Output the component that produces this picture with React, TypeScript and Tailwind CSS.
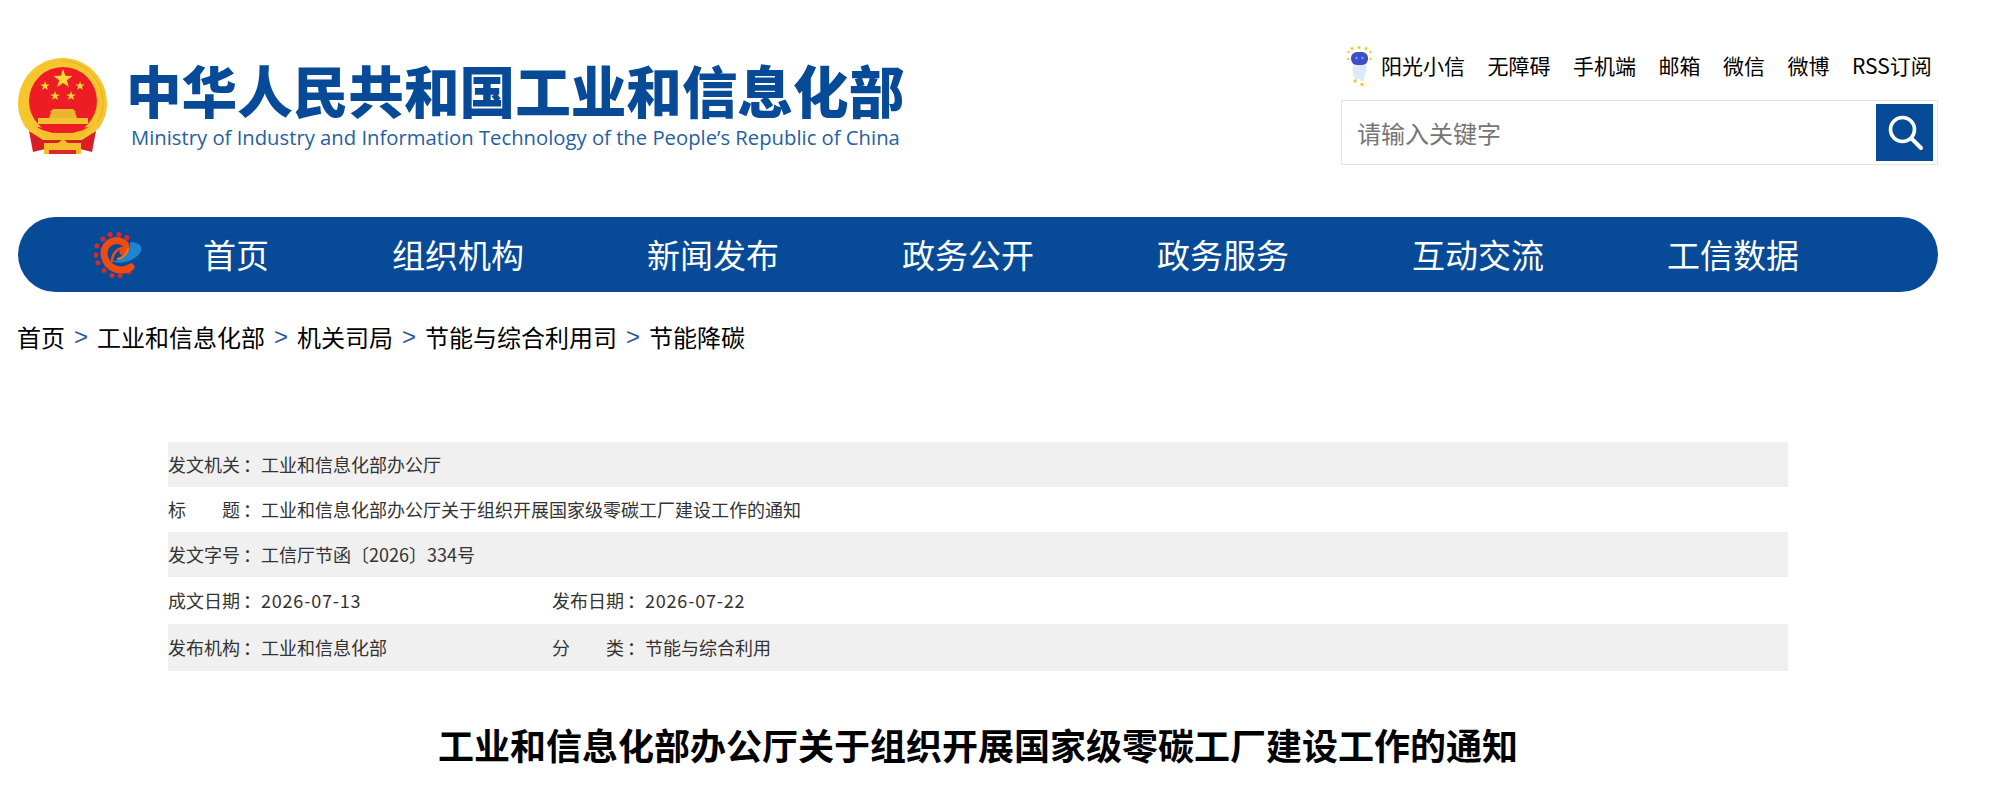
import React from 'react';

const topLinks = ['无障碍', '手机端', '邮箱', '微信', '微博', 'RSS订阅'];
const navItems = ['首页', '组织机构', '新闻发布', '政务公开', '政务服务', '互动交流', '工信数据'];
const crumbs = ['工业和信息化部', '机关司局', '节能与综合利用司', '节能降碳'];

function starPoints(cx: number, cy: number, r: number) {
  const pts: string[] = [];
  for (let i = 0; i < 10; i++) {
    const rad = i % 2 === 0 ? r : r * 0.4;
    const a = (Math.PI / 5) * i - Math.PI / 2;
    pts.push(`${(cx + rad * Math.cos(a)).toFixed(2)},${(cy + rad * Math.sin(a)).toFixed(2)}`);
  }
  return pts.join(' ');
}

function Emblem() {
  return (
    <svg viewBox="0 0 89 97" className="w-[89px] h-[97px] shrink-0 blur-[0.5px]">
      <path d="M44.5 1C69 1 89 21 89 47c0 9-3 17-8 24L66 84H23L8 71C3 64 0 56 0 47 0 21 20 1 44.5 1z" fill="#f6c630" />
      <path d="M44.5 4C67 4 85 23 85 46c0 7-2 14-6 20" fill="none" stroke="#e3a51d" strokeWidth="0.8" />
      <circle cx="45" cy="44" r="34" fill="#ee1c25" />
      <polygon points={starPoints(45, 22, 10)} fill="#fbd835" />
      <polygon points={starPoints(27, 29, 5)} fill="#fbd835" />
      <polygon points={starPoints(62, 29, 5)} fill="#fbd835" />
      <polygon points={starPoints(37, 39, 5)} fill="#fbd835" />
      <polygon points={starPoints(53, 39, 5)} fill="#fbd835" />
      <path d="M31 61l2-6h-1l3-3h20l3 3h-1l2 6z" fill="#eab62d" />
      <rect x="20" y="61" width="50" height="6" fill="#f3c233" />
      <path d="M11 74l4 21 16-4h27l16 4 4-21-14 9H25z" fill="#d81e27" />
      <path d="M14 67c7 3 14 8 22 9 4-4 13-4 17 0 8-1 15-6 22-9-4 8-13 15-22 16H36c-9-1-18-8-22-16z" fill="#f4bf2a" />
      <path d="M19 70c9 1 16 1 26 1s17 0 25-1c-5 4-13 6-25 6s-20-2-26-6z" fill="#ee1c25" />
      <path d="M26 86h14l5-4 5 4h13v11H26z" fill="#f4bf2a" />
      <rect x="31" y="93" width="27" height="4" fill="#e0252c" />
    </svg>
  );
}

function RobotIcon() {
  return (
    <svg viewBox="0 0 25 40" className="w-[25px] h-[40px] shrink-0 blur-[0.3px]">
      <path d="M7 17c2-1 9-1 11 0 2 3 2 8 0 12l-1 6h-3l-2-3-2 3-3-4c-2-4-2-10 0-14z" fill="#dce9f8" />
      <rect x="4" y="6" width="17" height="13" rx="6" fill="#3d4fc8" />
      <circle cx="9.5" cy="12" r="1.2" fill="#6fa8f5" />
      <circle cx="15.5" cy="12" r="1.2" fill="#6fa8f5" />
      <g fill="#fbc531">
        <circle cx="5" cy="2.5" r="1.5" />
        <circle cx="12" cy="1.5" r="1.5" />
        <circle cx="19" cy="2.5" r="1.5" />
        <circle cx="1.5" cy="6" r="1.2" />
        <circle cx="23.5" cy="6" r="1.2" />
        <circle cx="1" cy="13" r="1.2" />
        <circle cx="23.5" cy="13" r="1.2" />
        <circle cx="8" cy="35" r="1.7" />
        <circle cx="15" cy="38.5" r="1.7" />
      </g>
    </svg>
  );
}

function SiteIcon() {
  return (
    <svg viewBox="0 0 48 46" className="w-[48px] h-[46px] shrink-0">
      <g fill="#d92a2a">
        <circle cx="9" cy="7" r="2.5" /><circle cx="16" cy="2.5" r="2.5" /><circle cx="25" cy="2.5" r="2.5" /><circle cx="33" cy="5.5" r="2.5" />
        <circle cx="3" cy="14" r="2.5" /><circle cx="1.8" cy="23" r="2.5" /><circle cx="4" cy="31" r="2.5" /><circle cx="10" cy="38.5" r="2.5" />
        <circle cx="18" cy="43.5" r="2.5" /><circle cx="26" cy="43.5" r="2.5" /><circle cx="35" cy="40" r="2.5" />
      </g>
      <path d="M37 35C28 41 14 38 10.5 25 8 14 17 7 26 9c7 2 8 7 3 11" fill="none" stroke="#ee4a12" strokeWidth="7" strokeLinecap="round" />
      <path d="M13 27c9 6 25-3 23-17 8 0 13 4 11 9-3 8-21 17-34 8z" fill="#1c86d1" />
      <path d="M18 29c0-7 5-12 10-13" fill="none" stroke="#ee4a12" strokeWidth="2.6" strokeLinecap="round" />
      <path d="M24 27c5-1 9-5 10-10" fill="none" stroke="#f07a1a" strokeWidth="2.2" strokeLinecap="round" />
    </svg>
  );
}

function Label({ text }: { text: string }) {
  return (
    <span className="flex w-[93px] shrink-0">
      <span className="flex w-[72px] justify-between">
        {text.split('').map((c, i) => <span key={i}>{c}</span>)}
      </span>
      <span className="ml-[3px]">：</span>
    </span>
  );
}

function Row({ className, children }: { className: string; children: React.ReactNode }) {
  return <div className={`flex items-center ${className}`}>{children}</div>;
}

export default function App() {
  return (
    <div className="h-[812px] w-[2010px] overflow-hidden bg-white font-['Noto_Sans_CJK_SC','Noto_Sans',sans-serif]">
      <div className="ml-[18px] w-[1920px]">
        <header className="flex h-[217px] justify-between">
          <div className="flex pt-[57px]">
            <Emblem />
            <div className="ml-[19px] pt-[1px]">
              <div className="h-[62px] text-[55.6px] font-black leading-[62px] text-[#064a98] blur-[0.4px]">中华人民共和国工业和信息化部</div>
              <div className="ml-[5px] mt-[3px] whitespace-nowrap font-['Open_Sans',sans-serif] text-[20.25px] leading-[28px] text-[#2560a2]">Ministry of Industry and Information Technology of the People’s Republic of China</div>
            </div>
          </div>
          <div className="w-[597px] pt-[46px]">
            <div className="flex h-[40px] items-center text-[21px] text-black">
              <span className="ml-[6px] mr-[9px]"><RobotIcon /></span>
              <span className="mr-[22.5px]">阳光小信</span>
              {topLinks.map(t => <span key={t} className="mr-[22.5px] last:mr-0">{t}</span>)}
            </div>
            <div className="mt-[14px] flex h-[65px] items-center border border-[#e4e4e4] pl-[15px] pr-[4px]">
              <input placeholder="请输入关键字" className="min-w-0 flex-1 text-[24px] outline-none placeholder:text-[#757575]" />
              <div className="flex h-[57px] w-[57px] items-center justify-center bg-[#074a97]">
                <svg viewBox="0 0 40 40" className="h-[40px] w-[40px]" fill="none" stroke="#fff">
                  <circle cx="17.5" cy="16.5" r="12" strokeWidth="3.6" />
                  <path d="M27 26l9 9" strokeWidth="4" strokeLinecap="round" />
                </svg>
              </div>
            </div>
          </div>
        </header>

        <nav className="flex h-[75px] items-center rounded-[38px] bg-[#074a97] pl-[76px] text-[33px] text-white">
          <SiteIcon />
          <div className="ml-[61px] flex gap-[123px]">
            {navItems.map(n => <span key={n}>{n}</span>)}
          </div>
        </nav>

        <div className="-ml-[1px] mt-[27px] flex h-[36px] items-center text-[24px] text-black">
          <span>首页</span>
          {crumbs.map(c => (
            <React.Fragment key={c}>
              <span className="w-[32px] text-center font-['Liberation_Sans',sans-serif] text-[#2a5c9f]">&gt;</span>
              <span>{c}</span>
            </React.Fragment>
          ))}
        </div>

        <div className="ml-[150px] mt-[87px] w-[1620px] text-[18px] text-[#333]">
          <Row className="h-[45px] bg-[#f0f0f0]"><Label text="发文机关" />工业和信息化部办公厅</Row>
          <Row className="h-[45px]"><Label text="标题" />工业和信息化部办公厅关于组织开展国家级零碳工厂建设工作的通知</Row>
          <Row className="h-[45px] bg-[#f0f0f0]"><Label text="发文字号" />工信厅节函〔2026〕334号</Row>
          <Row className="h-[47px]">
            <div className="flex w-[384px]"><Label text="成文日期" /><span className="tracking-[0.8px]">2026-07-13</span></div>
            <div className="flex"><Label text="发布日期" /><span className="tracking-[0.8px]">2026-07-22</span></div>
          </Row>
          <Row className="h-[47px] bg-[#f0f0f0]">
            <div className="flex w-[384px]"><Label text="发布机构" />工业和信息化部</div>
            <div className="flex"><Label text="分类" />节能与综合利用</div>
          </Row>
        </div>

        <h1 className="mt-[48px] text-center text-[36px] font-bold leading-[50px] text-black">工业和信息化部办公厅关于组织开展国家级零碳工厂建设工作的通知</h1>
      </div>
    </div>
  );
}
